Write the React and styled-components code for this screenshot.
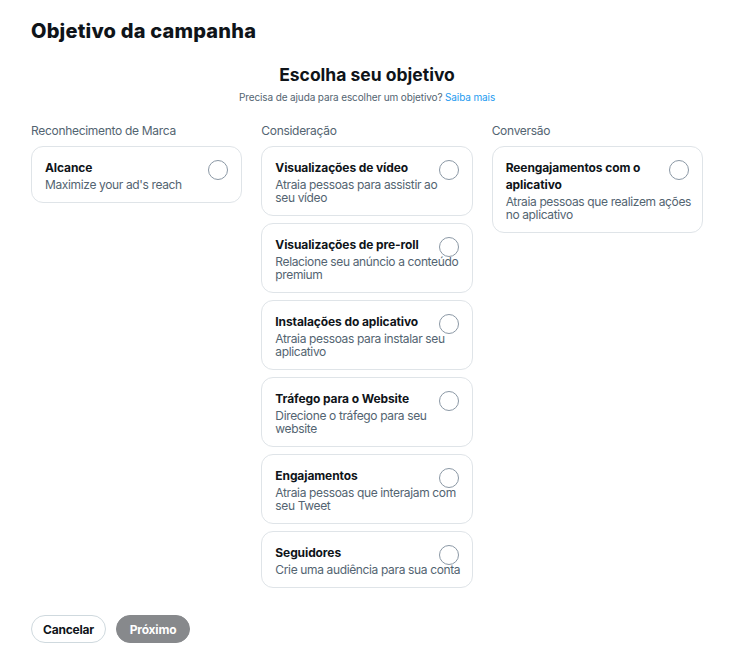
import React from "react";
import styled, { createGlobalStyle } from "styled-components";

const columns = [
  {
    label: "Reconhecimento de Marca",
    items: [{ title: "Alcance", text: "Maximize your ad's reach" }],
  },
  {
    label: "Consideração",
    items: [
      { title: "Visualizações de vídeo", text: "Atraia pessoas para assistir ao seu\u00a0vídeo" },
      { title: "Visualizações de pre-roll", text: "Relacione seu anúncio a conteúdo premium" },
      { title: "Instalações do aplicativo", text: "Atraia pessoas para instalar seu aplicativo" },
      { title: "Tráfego para o Website", text: "Direcione o tráfego para seu website" },
      { title: "Engajamentos", text: "Atraia pessoas que interajam com seu Tweet" },
      { title: "Seguidores", text: "Crie uma audiência para sua conta" },
    ],
  },
  {
    label: "Conversão",
    items: [
      {
        title: "Reengajamentos com o aplicativo",
        text: "Atraia pessoas que realizem ações no aplicativo",
      },
    ],
  },
];

const GlobalStyle = createGlobalStyle`
  body {
    margin: 0;
    background: #ffffff;
    font-family: Inter, "Liberation Sans", sans-serif;
    color: #0f1419;
  }
`;

const Page = styled.div`
  padding: 19px 29px 20px 31px;
`;

const Title = styled.h1`
  margin: 0;
  font-size: 20px;
  line-height: 24px;
  font-weight: 800;
  letter-spacing: 0.2px;
`;

const Intro = styled.div`
  margin-top: 21px;
  text-align: center;
`;

const Heading = styled.h2`
  margin: 0;
  font-size: 17.5px;
  line-height: 22px;
  font-weight: 700;
`;

const Help = styled.p`
  margin: 4px 0 0;
  font-size: 10px;
  line-height: 14px;
  letter-spacing: -0.12px;
  color: #536471;
`;

const Link = styled.a`
  color: #1d9bf0;
  text-decoration: none;
`;

const Grid = styled.div`
  margin-top: 19px;
  display: grid;
  grid-template-columns: repeat(3, 1fr);
  column-gap: 19px;
  align-items: start;
`;

const Column = styled.div`
  display: flex;
  flex-direction: column;
  gap: 7px;
`;

const Label = styled.div`
  font-size: 12px;
  line-height: 16px;
  letter-spacing: -0.3px;
  color: #536471;
`;

const Card = styled.label`
  display: grid;
  grid-template-columns: 1fr 20px;
  column-gap: 6px;
  padding: 12px 7px 11px 13px;
  border: 1px solid #dfe4e8;
  border-radius: 12px;
  cursor: pointer;
`;

const CardTitle = styled.div`
  grid-column: 1;
  grid-row: 1;
  font-size: 12px;
  line-height: 17px;
  font-weight: 700;
  letter-spacing: -0.1px;
`;

const CardText = styled.div`
  grid-column: 1 / -1;
  grid-row: 2;
  margin-top: 2px;
  font-size: 12px;
  line-height: 13px;
  letter-spacing: -0.36px;
  color: #536471;
`;

const Radio = styled.span`
  grid-column: 2;
  grid-row: 1 / span 2;
  margin: 1px 0 0 -6px;
  width: 18px;
  height: 18px;
  border: 1px solid #8b98a5;
  border-radius: 50%;
  background: #fff;
`;

const Actions = styled.div`
  margin-top: 27px;
  display: flex;
  gap: 10px;
`;

const Button = styled.button`
  height: 28px;
  padding: 0 11px;
  border-radius: 14px;
  font-family: inherit;
  font-size: 12px;
  font-weight: 700;
  letter-spacing: -0.2px;
  border: 1px solid ${(p) => (p.$primary ? "#87898c" : "#cfd9de")};
  background: ${(p) => (p.$primary ? "#87898c" : "#ffffff")};
  color: ${(p) => (p.$primary ? "#ffffff" : "#0f1419")};
  width: ${(p) => (p.$primary ? "74px" : "75px")};
`;

export default function App() {
  return (
    <>
      <GlobalStyle />
      <Page>
        <Title>Objetivo da campanha</Title>
        <Intro>
          <Heading>Escolha seu objetivo</Heading>
          <Help>
            Precisa de ajuda para escolher um objetivo? <Link href="#">Saiba mais</Link>
          </Help>
        </Intro>
        <Grid>
          {columns.map((col) => (
            <Column key={col.label}>
              <Label>{col.label}</Label>
              {col.items.map((item) => (
                <Card key={item.title}>
                  <CardTitle>{item.title}</CardTitle>
                  <Radio />
                  <CardText>{item.text}</CardText>
                </Card>
              ))}
            </Column>
          ))}
        </Grid>
        <Actions>
          <Button>Cancelar</Button>
          <Button $primary disabled>
            Próximo
          </Button>
        </Actions>
      </Page>
    </>
  );
}
